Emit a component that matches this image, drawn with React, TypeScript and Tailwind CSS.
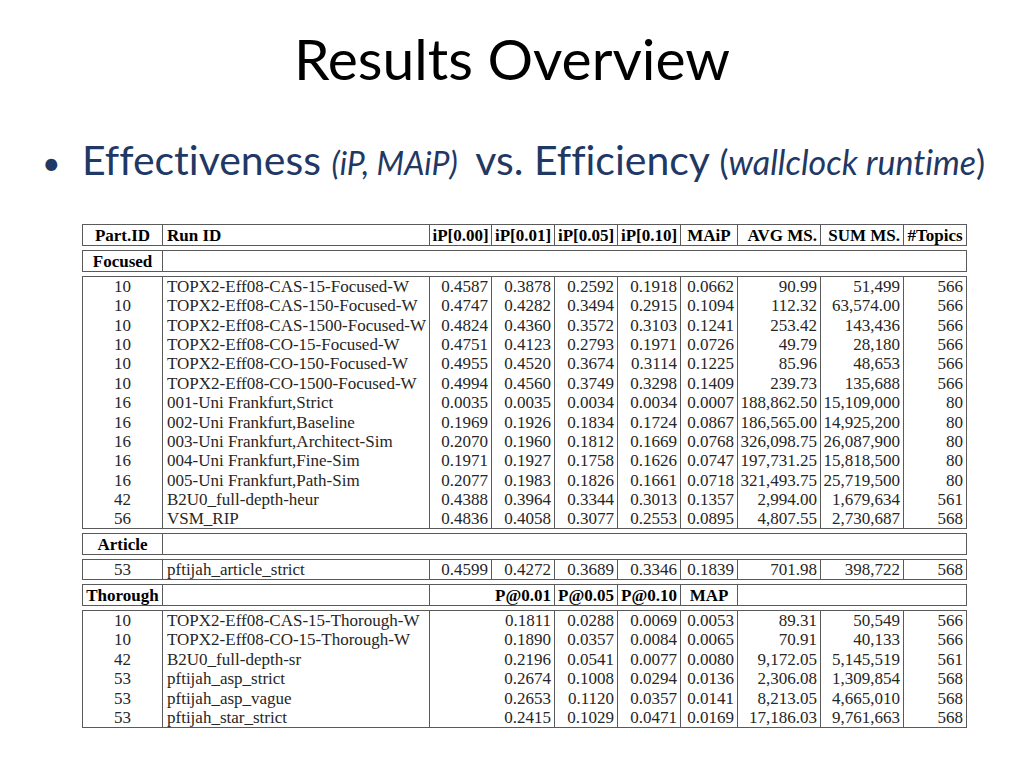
import React from 'react';

type Cell = { text?: string; span?: number; align?: 'left' | 'center' | 'right'; bold?: boolean };

const colWidths = [80, 267, 62, 63, 63, 63, 57, 83, 83, 63];

const alignClass = {
    left: 'text-left pl-[4px]',
    center: 'text-center',
    right: 'text-right pr-[3px]',
};

function dataRow(id: string, run: string, values: string[]): Cell[] {
    return [
        { text: id, align: 'center' },
        { text: run, align: 'left' },
        ...values.map((v) => ({ text: v, align: 'right' as const })),
    ];
}

function thoroughRow(id: string, run: string, values: string[]): Cell[] {
    return [
        { text: id, align: 'center' },
        { text: run, align: 'left' },
        { text: values[0], align: 'right', span: 2 },
        ...values.slice(1).map((v) => ({ text: v, align: 'right' as const })),
    ];
}

const headerRow: Cell[] = [
    { text: 'Part.ID', align: 'center', bold: true },
    { text: 'Run ID', align: 'left', bold: true },
    { text: 'iP[0.00]', align: 'center', bold: true },
    { text: 'iP[0.01]', align: 'center', bold: true },
    { text: 'iP[0.05]', align: 'center', bold: true },
    { text: 'iP[0.10]', align: 'center', bold: true },
    { text: 'MAiP', align: 'center', bold: true },
    { text: 'AVG MS.', align: 'right', bold: true },
    { text: 'SUM MS.', align: 'right', bold: true },
    { text: '#Topics', align: 'center', bold: true },
];

const labelRow = (label: string): Cell[] => [
    { text: label, align: 'center', bold: true },
    { text: '', span: 9 },
];

const focusedRows: Cell[][] = [
    dataRow('10', 'TOPX2-Eff08-CAS-15-Focused-W', ['0.4587', '0.3878', '0.2592', '0.1918', '0.0662', '90.99', '51,499', '566']),
    dataRow('10', 'TOPX2-Eff08-CAS-150-Focused-W', ['0.4747', '0.4282', '0.3494', '0.2915', '0.1094', '112.32', '63,574.00', '566']),
    dataRow('10', 'TOPX2-Eff08-CAS-1500-Focused-W', ['0.4824', '0.4360', '0.3572', '0.3103', '0.1241', '253.42', '143,436', '566']),
    dataRow('10', 'TOPX2-Eff08-CO-15-Focused-W', ['0.4751', '0.4123', '0.2793', '0.1971', '0.0726', '49.79', '28,180', '566']),
    dataRow('10', 'TOPX2-Eff08-CO-150-Focused-W', ['0.4955', '0.4520', '0.3674', '0.3114', '0.1225', '85.96', '48,653', '566']),
    dataRow('10', 'TOPX2-Eff08-CO-1500-Focused-W', ['0.4994', '0.4560', '0.3749', '0.3298', '0.1409', '239.73', '135,688', '566']),
    dataRow('16', '001-Uni Frankfurt,Strict', ['0.0035', '0.0035', '0.0034', '0.0034', '0.0007', '188,862.50', '15,109,000', '80']),
    dataRow('16', '002-Uni Frankfurt,Baseline', ['0.1969', '0.1926', '0.1834', '0.1724', '0.0867', '186,565.00', '14,925,200', '80']),
    dataRow('16', '003-Uni Frankfurt,Architect-Sim', ['0.2070', '0.1960', '0.1812', '0.1669', '0.0768', '326,098.75', '26,087,900', '80']),
    dataRow('16', '004-Uni Frankfurt,Fine-Sim', ['0.1971', '0.1927', '0.1758', '0.1626', '0.0747', '197,731.25', '15,818,500', '80']),
    dataRow('16', '005-Uni Frankfurt,Path-Sim', ['0.2077', '0.1983', '0.1826', '0.1661', '0.0718', '321,493.75', '25,719,500', '80']),
    dataRow('42', 'B2U0_full-depth-heur', ['0.4388', '0.3964', '0.3344', '0.3013', '0.1357', '2,994.00', '1,679,634', '561']),
    dataRow('56', 'VSM_RIP', ['0.4836', '0.4058', '0.3077', '0.2553', '0.0895', '4,807.55', '2,730,687', '568']),
];

const articleRows: Cell[][] = [
    dataRow('53', 'pftijah_article_strict', ['0.4599', '0.4272', '0.3689', '0.3346', '0.1839', '701.98', '398,722', '568']),
];

const thoroughHeader: Cell[] = [
    { text: 'Thorough', align: 'center', bold: true },
    { text: '' },
    { text: 'P@0.01', align: 'right', span: 2, bold: true },
    { text: 'P@0.05', align: 'center', bold: true },
    { text: 'P@0.10', align: 'center', bold: true },
    { text: 'MAP', align: 'center', bold: true },
    { text: '', span: 3 },
];

const thoroughRows: Cell[][] = [
    thoroughRow('10', 'TOPX2-Eff08-CAS-15-Thorough-W', ['0.1811', '0.0288', '0.0069', '0.0053', '89.31', '50,549', '566']),
    thoroughRow('10', 'TOPX2-Eff08-CO-15-Thorough-W', ['0.1890', '0.0357', '0.0084', '0.0065', '70.91', '40,133', '566']),
    thoroughRow('42', 'B2U0_full-depth-sr', ['0.2196', '0.0541', '0.0077', '0.0080', '9,172.05', '5,145,519', '561']),
    thoroughRow('53', 'pftijah_asp_strict', ['0.2674', '0.1008', '0.0294', '0.0136', '2,306.08', '1,309,854', '568']),
    thoroughRow('53', 'pftijah_asp_vague', ['0.2653', '0.1120', '0.0357', '0.0141', '8,213.05', '4,665,010', '568']),
    thoroughRow('53', 'pftijah_star_strict', ['0.2415', '0.1029', '0.0471', '0.0169', '17,186.03', '9,761,663', '568']),
];

function Block({ rows, header = false }: { rows: Cell[][]; header?: boolean }) {
    return (
        <table className="w-[884px] table-fixed border-collapse border border-[#5a5a5a]">
            <colgroup>
                {colWidths.map((w, i) => (
                    <col key={i} style={{ width: w }} />
                ))}
            </colgroup>
            <tbody>
                {rows.map((row, r) => (
                    <tr key={r} className={header ? 'h-[21px]' : 'h-[19.4px]'}>
                        {row.map((cell, c) => (
                            <td
                                key={c}
                                colSpan={cell.span ?? 1}
                                className={`overflow-visible whitespace-nowrap border-x border-[#5a5a5a] p-0 align-middle leading-[19px] ${
                                    alignClass[cell.align ?? 'left']
                                } ${cell.bold ? 'font-bold text-black' : 'text-[#262626]'}`}
                            >
                                {cell.text}
                            </td>
                        ))}
                    </tr>
                ))}
            </tbody>
        </table>
    );
}

export default function App() {
    return (
        <div className="h-[768px] w-[1024px] overflow-hidden bg-white [font-variant-ligatures:none]">
            <h1 className="pt-[22px] text-center font-['Lato',sans-serif] text-[57px] leading-[72px] font-normal text-black">
                Results Overview
            </h1>
            <div className="mt-[41px] flex h-[50px] items-baseline font-['Lato',sans-serif] leading-[50px] text-[#1f3864]">
                <span className="w-[82px] pl-[42px] text-[32px]">•</span>
                <span className="text-[41px]">
                    Effectiveness <i className="mr-[8px] text-[32px]">(iP, MAiP)</i> vs. Efficiency{' '}
                    <span className="text-[34px]">
                        (<i>wallclock runtime</i>)
                    </span>
                </span>
            </div>
            <div className="mt-[39px] ml-[82px] flex flex-col font-['Liberation_Serif',serif] text-[17px]">
                <Block rows={[headerRow]} header />
                <div className="mt-[4px]">
                    <Block rows={[labelRow('Focused')]} header />
                </div>
                <div className="mt-[4px]">
                    <Block rows={focusedRows} />
                </div>
                <div className="mt-[4px]">
                    <Block rows={[labelRow('Article')]} header />
                </div>
                <div className="mt-[4px]">
                    <Block rows={articleRows} />
                </div>
                <div className="mt-[4px]">
                    <Block rows={[thoroughHeader]} header />
                </div>
                <div className="mt-[4px]">
                    <Block rows={thoroughRows} />
                </div>
            </div>
        </div>
    );
}
